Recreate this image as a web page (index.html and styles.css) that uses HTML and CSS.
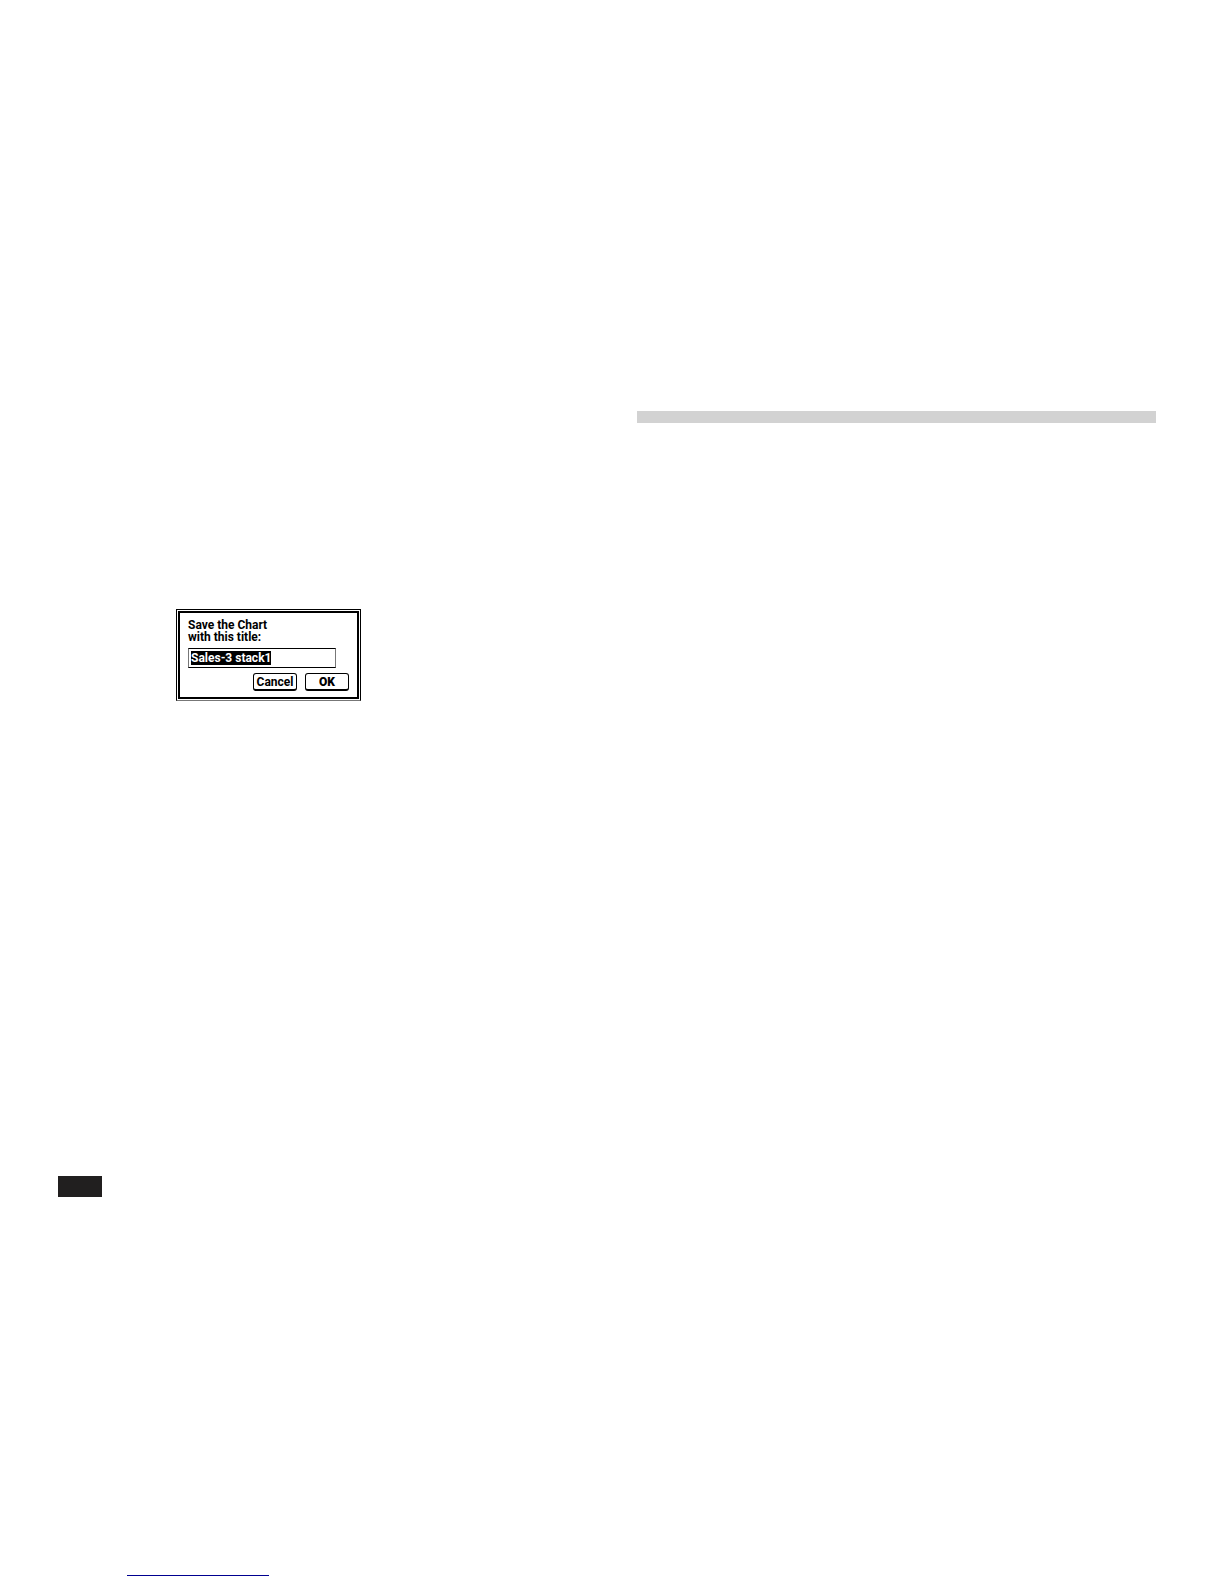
FILE: index.html
```
<!DOCTYPE html>
<html lang="en">
<head>
<meta charset="utf-8">
<title>Save chart</title>
<link rel="stylesheet" href="styles.css">
</head>
<body>
<main class="spread">
  <section class="page-left">
    <form class="dialog">
      <div class="dialog-inner">
        <label class="prompt" for="chart-title">Save the Chart<br>with this title:</label>
        <input class="title-field" id="chart-title" type="text" value="Sales-3 stack1" spellcheck="false" autocomplete="off">
        <div class="actions">
          <button class="button" type="button">Cancel</button>
          <button class="button button-ok" type="button">OK</button>
        </div>
      </div>
    </form>
  </section>
  <section class="page-right">
    <div class="section-bar"></div>
  </section>
</main>
<div class="page-tab"></div>
<footer class="footer"><a class="footer-link" href="#" aria-label="Manual website"></a></footer>
<script src="script.js"></script>
</body>
</html>
```
FILE: styles.css
```
* {
  box-sizing: border-box;
}

body {
  margin: 0;
  background: #fff;
  color: #000;
  font-family: Roboto, "Liberation Sans", sans-serif;
  font-size: 12px;
  font-weight: 700;
  line-height: 12px;
}

.spread {
  display: grid;
  grid-template-columns: 637fr 587fr;
  min-height: 1176px;
}

.page-left {
  padding: 609px 0 0 176px;
}

.page-right {
  padding: 411px 68px 0 0;
}

.section-bar {
  height: 12px;
  background: #d2d2d2;
}

.dialog {
  width: 185px;
  padding: 1px;
  border: 1px solid #000;
  border-bottom-color: #777;
}

.dialog-inner {
  padding: 6px 8px;
  border: 2px solid #000;
}

.prompt {
  display: block;
}

.title-field {
  display: block;
  width: 148px;
  height: 20px;
  margin-top: 5px;
  padding: 0 2px;
  border: 1px solid #000;
  border-left-color: #777;
  border-right-color: #777;
  border-radius: 0;
  outline: none;
  background: #fff;
  color: #000;
  font: inherit;
}

.title-field::selection {
  background: #000;
  color: #fff;
}

.actions {
  display: flex;
  justify-content: flex-end;
  gap: 8px;
  margin-top: 5px;
}

.button {
  width: 44px;
  height: 18px;
  padding: 0;
  border: 1px solid #000;
  border-bottom-width: 2px;
  border-radius: 3px;
  background: #fff;
  color: #000;
  font: inherit;
}

.button-ok {
  font-weight: 900;
}

.page-tab {
  width: 44px;
  height: 21px;
  margin-left: 58px;
  background: #211f1f;
}

.footer {
  padding: 378px 0 8px 127px;
}

.footer-link {
  display: block;
  width: 142px;
  height: 1px;
  background: #000090;
}
```
FILE: script.js
```
const field = document.getElementById("chart-title");
field.focus({ preventScroll: true });
field.select();
```
